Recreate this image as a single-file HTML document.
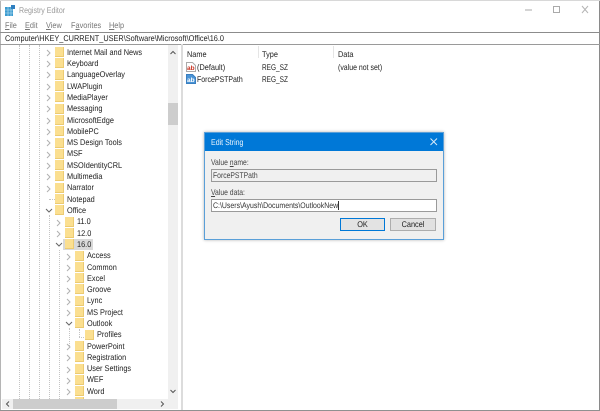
<!DOCTYPE html>
<html><head><meta charset="utf-8"><style>
html,body{margin:0;padding:0;background:#fff}
#r{position:relative;width:600px;height:411px;overflow:hidden;background:#fff;font:8.3px "Liberation Sans",sans-serif;color:#222;filter:blur(.35px)}
#r div,#r svg{position:absolute}
.t{white-space:pre;line-height:11px;height:11px;transform:scaleX(.885);transform-origin:0 0;text-rendering:geometricPrecision}
.n{transform:scaleX(.84)}
.m{transform:scaleX(.78)}
.d{transform:scaleX(.82)}
.f{width:8px;height:8.5px;background:#fbdf90;border-right:1px solid #eccb72;border-bottom:1px solid #eccb72}
.l{width:0;border-left:1px dotted #c4c4c4}
</style></head><body><div id="r">
<div style="left:0;top:0;width:1px;height:411px;background:#b5b5b5"></div>
<div style="left:599px;top:0;width:1px;height:411px;background:#8a8a8a"></div>
<div style="left:0;top:410px;width:600px;height:1px;background:#909090"></div>
<div style="left:0;top:0;width:600px;height:1px;background:#d8d8d8"></div>
<svg style="left:5px;top:5px" width="10" height="11" viewBox="0 0 10 11"><rect x="0" y="2" width="8" height="9" fill="#3a9bd0"/><path d="M0 5h8M0 8h8M3 2v9M6 2v9" stroke="#bfe0f0" stroke-width=".6"/><rect x="6" y="0" width="4" height="4" fill="#2f7fc0"/></svg>
<div class="t n" style="left:19px;top:5px;color:#9a9a9a;font-size:8.4px">Registry Editor</div>
<svg style="left:520px;top:3px" width="75" height="14" viewBox="0 0 75 14"><path d="M5 7h7" stroke="#aaa"/><rect x="33.500" y="3.500" width="6" height="6" fill="none" stroke="#aaa"/><path d="M62 3l6 7M68 3l-6 7" stroke="#b5b5b5"/></svg>
<div class="t" style="left:5px;top:20px;color:#777"><u>F</u>ile</div>
<div class="t" style="left:25px;top:20px;color:#777"><u>E</u>dit</div>
<div class="t" style="left:46px;top:20px;color:#777"><u>V</u>iew</div>
<div class="t" style="left:71px;top:20px;color:#777">F<u>a</u>vorites</div>
<div class="t" style="left:109px;top:20px;color:#777"><u>H</u>elp</div>
<div style="left:0;top:32px;width:600px;height:11px;border-top:1px solid #8c8c8c;border-bottom:1px solid #9a9a9a"></div>
<div class="t" style="left:5px;top:33px;color:#222">Computer\HKEY_CURRENT_USER\Software\Microsoft\Office\16.0</div>
<div style="left:181px;top:44px;width:2px;height:366px;background:#dcdcdc"></div>

<div class="l" style="left:19px;top:45px;height:354px"></div>
<div class="l" style="left:29px;top:45px;height:354px"></div>
<div class="l" style="left:39px;top:45px;height:354px"></div>
<div class="l" style="left:49px;top:215px;height:184px"></div>
<div class="l" style="left:59px;top:250px;height:149px"></div>
<div class="l" style="left:69px;top:328px;height:18px"></div>
<div style="left:79px;top:337px;width:5px;height:0;border-top:1px dotted #c4c4c4"></div>
<div style="left:79px;top:329px;width:0;height:8px;border-left:1px dotted #c4c4c4"></div>
<div style="left:49px;top:199px;width:6px;height:0;border-top:1px dotted #c4c4c4"></div>
<svg style="left:0;top:45px" width="100" height="354" viewBox="0 45 100 354" fill="none" stroke="#b0b0b0" stroke-width="1">
<path d="M47 50l3 3-3 3M47 61l3 3-3 3M47 72l3 3-3 3M47 84l3 3-3 3M47 95l3 3-3 3M47 106l3 3-3 3M47 118l3 3-3 3M47 129l3 3-3 3M47 140l3 3-3 3M47 152l3 3-3 3M47 163l3 3-3 3M47 174l3 3-3 3M47 186l3 3-3 3"/>
<path d="M46 209l3 3 3-3" stroke="#666"/>
<path d="M57 220l3 3-3 3M57 231l3 3-3 3"/>
<path d="M56 243l3 3 3-3" stroke="#666"/>
<path d="M67 254l3 3-3 3M67 265l3 3-3 3M67 276l3 3-3 3M67 288l3 3-3 3M67 299l3 3-3 3M67 310l3 3-3 3"/>
<path d="M66 322l3 3 3-3" stroke="#666"/>
<path d="M67 344l3 3-3 3M67 355l3 3-3 3M67 367l3 3-3 3M67 378l3 3-3 3M67 389l3 3-3 3"/>
</svg>

<div class="f" style="left:55px;top:47px"></div><div class="t" style="left:67px;top:47px">Internet Mail and News</div>
<div class="f" style="left:55px;top:58px"></div><div class="t" style="left:67px;top:58px">Keyboard</div>
<div class="f" style="left:55px;top:70px"></div><div class="t" style="left:67px;top:69px">LanguageOverlay</div>
<div class="f" style="left:55px;top:81px"></div><div class="t" style="left:67px;top:81px">LWAPlugin</div>
<div class="f" style="left:55px;top:92px"></div><div class="t" style="left:67px;top:92px">MediaPlayer</div>
<div class="f" style="left:55px;top:104px"></div><div class="t" style="left:67px;top:103px">Messaging</div>
<div class="f" style="left:55px;top:115px"></div><div class="t" style="left:67px;top:115px">MicrosoftEdge</div>
<div class="f" style="left:55px;top:126px"></div><div class="t" style="left:67px;top:126px">MobilePC</div>
<div class="f" style="left:55px;top:138px"></div><div class="t" style="left:67px;top:137px">MS Design Tools</div>
<div class="f" style="left:55px;top:149px"></div><div class="t" style="left:67px;top:148px">MSF</div>
<div class="f" style="left:55px;top:160px"></div><div class="t" style="left:67px;top:160px">MSOIdentityCRL</div>
<div class="f" style="left:55px;top:171px"></div><div class="t" style="left:67px;top:171px">Multimedia</div>
<div class="f" style="left:55px;top:183px"></div><div class="t" style="left:67px;top:182px">Narrator</div>
<div class="f" style="left:55px;top:194px"></div><div class="t" style="left:67px;top:194px">Notepad</div>
<div class="f" style="left:55px;top:205px"></div><div class="t" style="left:67px;top:205px">Office</div>
<div class="f" style="left:65px;top:217px"></div><div class="t" style="left:77px;top:216px">11.0</div>
<div class="f" style="left:65px;top:228px"></div><div class="t" style="left:77px;top:228px">12.0</div>
<div style="left:63px;top:239px;width:30px;height:11px;background:#d9d9d9"></div>
<div class="f" style="left:65px;top:239px"></div><div class="t" style="left:77px;top:239px">16.0</div>
<div class="f" style="left:75px;top:251px"></div><div class="t" style="left:87px;top:250px">Access</div>
<div class="f" style="left:75px;top:262px"></div><div class="t" style="left:87px;top:262px">Common</div>
<div class="f" style="left:75px;top:273px"></div><div class="t" style="left:87px;top:273px">Excel</div>
<div class="f" style="left:75px;top:284px"></div><div class="t" style="left:87px;top:284px">Groove</div>
<div class="f" style="left:75px;top:296px"></div><div class="t" style="left:87px;top:295px">Lync</div>
<div class="f" style="left:75px;top:307px"></div><div class="t" style="left:87px;top:307px">MS Project</div>
<div class="f" style="left:75px;top:318px"></div><div class="t" style="left:87px;top:318px">Outlook</div>
<div class="f" style="left:85px;top:330px"></div><div class="t" style="left:97px;top:329px">Profiles</div>
<div class="f" style="left:75px;top:341px"></div><div class="t" style="left:87px;top:341px">PowerPoint</div>
<div class="f" style="left:75px;top:352px"></div><div class="t" style="left:87px;top:352px">Registration</div>
<div class="f" style="left:75px;top:364px"></div><div class="t" style="left:87px;top:363px">User Settings</div>
<div class="f" style="left:75px;top:375px"></div><div class="t" style="left:87px;top:374px">WEF</div>
<div class="f" style="left:75px;top:386px"></div><div class="t" style="left:87px;top:386px">Word</div>
<div class="f" style="left:75px;top:397px"></div>

<div style="left:168px;top:45px;width:10px;height:354px;background:#f0f0f0"></div>
<div style="left:168px;top:103px;width:10px;height:22px;background:#cdcdcd"></div>
<svg style="left:168px;top:47px" width="10" height="350" viewBox="0 0 10 350" fill="none" stroke="#555"><path d="M2.500 7l2.500-2.500 2.500 2.500M2.500 343l2.500 2.500 2.500-2.500"/></svg>
<div style="left:2px;top:399px;width:176px;height:10px;background:#f0f0f0"></div>
<div style="left:13px;top:399px;width:104px;height:10px;background:#cdcdcd"></div>
<svg style="left:2px;top:399px" width="166" height="10" viewBox="0 0 166 10" fill="none" stroke="#555"><path d="M7 2.500l-2.500 2.500 2.500 2.500M159 2.500l2.500 2.500-2.500 2.500"/></svg>

<div class="t" style="left:187px;top:49px">Name</div>
<div class="t" style="left:262px;top:49px">Type</div>
<div class="t" style="left:338px;top:49px">Data</div>
<div style="left:258px;top:46px;width:1px;height:12px;background:#e5e5e5"></div>
<div style="left:333px;top:46px;width:1px;height:12px;background:#e5e5e5"></div>
<svg style="left:186px;top:62px" width="10" height="22" viewBox="0 0 10 22"><path d="M.5.5h6l3 3v6h-9z" fill="#fff" stroke="#aaa"/><text x="1" y="8" font-family="Liberation Sans" font-size="6.5" font-weight="bold" fill="#c8301e">ab</text><path d="M.5 12.500h6l3 3v6h-9z" fill="#4a94d6" stroke="#3a7fc0"/><text x="1" y="20" font-family="Liberation Sans" font-size="6.5" font-weight="bold" fill="#fff">ab</text></svg>
<div class="t" style="left:197px;top:62px">(Default)</div>
<div class="t m" style="left:262px;top:62px">REG_SZ</div>
<div class="t n" style="left:338px;top:62px">(value not set)</div>
<div class="t n" style="left:197px;top:74px">ForcePSTPath</div>
<div class="t m" style="left:262px;top:74px">REG_SZ</div>

<div style="left:204px;top:132px;width:238px;height:106px;background:#f0f0f0;border:1px solid #5a9fd8;box-shadow:0 0 3px rgba(0,0,0,.3)"></div>
<div style="left:205px;top:133px;width:238px;height:18px;background:#0078d7"></div>
<div class="t n" style="left:211px;top:137px;color:#eaf4fc;font-size:8.4px">Edit String</div>
<svg style="left:429px;top:137px" width="10" height="10" viewBox="0 0 10 10"><path d="M1.500 1.500l6.500 6.500M8 1.500l-6.500 6.500" stroke="#d6e9f8"/></svg>
<div class="t d" style="left:211px;top:157px;color:#444">Value <u>n</u>ame:</div>
<div style="left:211px;top:169px;width:224px;height:11px;background:#f0f0f0;border:1px solid #9a9a9a"></div>
<div class="t d" style="left:213px;top:170px;color:#444">ForcePSTPath</div>
<div class="t d" style="left:211px;top:187px;color:#444"><u>V</u>alue data:</div>
<div style="left:211px;top:199px;width:224px;height:11px;background:#fff;border:1px solid #9a9a9a"></div>
<div class="t" style="left:213px;top:200px;color:#333;font-size:8.1px;transform:scaleX(.86)">C:\Users\Ayush\Documents\OutlookNew</div>
<div style="left:338px;top:201px;width:1px;height:9px;background:#333"></div>
<div style="left:340px;top:218px;width:43px;height:11px;background:#e3e3e3;border:1px solid #0078d7"></div>
<div class="t" style="left:340px;top:219px;width:45px;text-align:center;color:#222;transform-origin:50% 0">OK</div>
<div style="left:390px;top:218px;width:44px;height:11px;background:#e1e1e1;border:1px solid #adadad"></div>
<div class="t" style="left:390px;top:219px;width:46px;text-align:center;color:#222;transform-origin:50% 0">Cancel</div>
</div></body></html>
